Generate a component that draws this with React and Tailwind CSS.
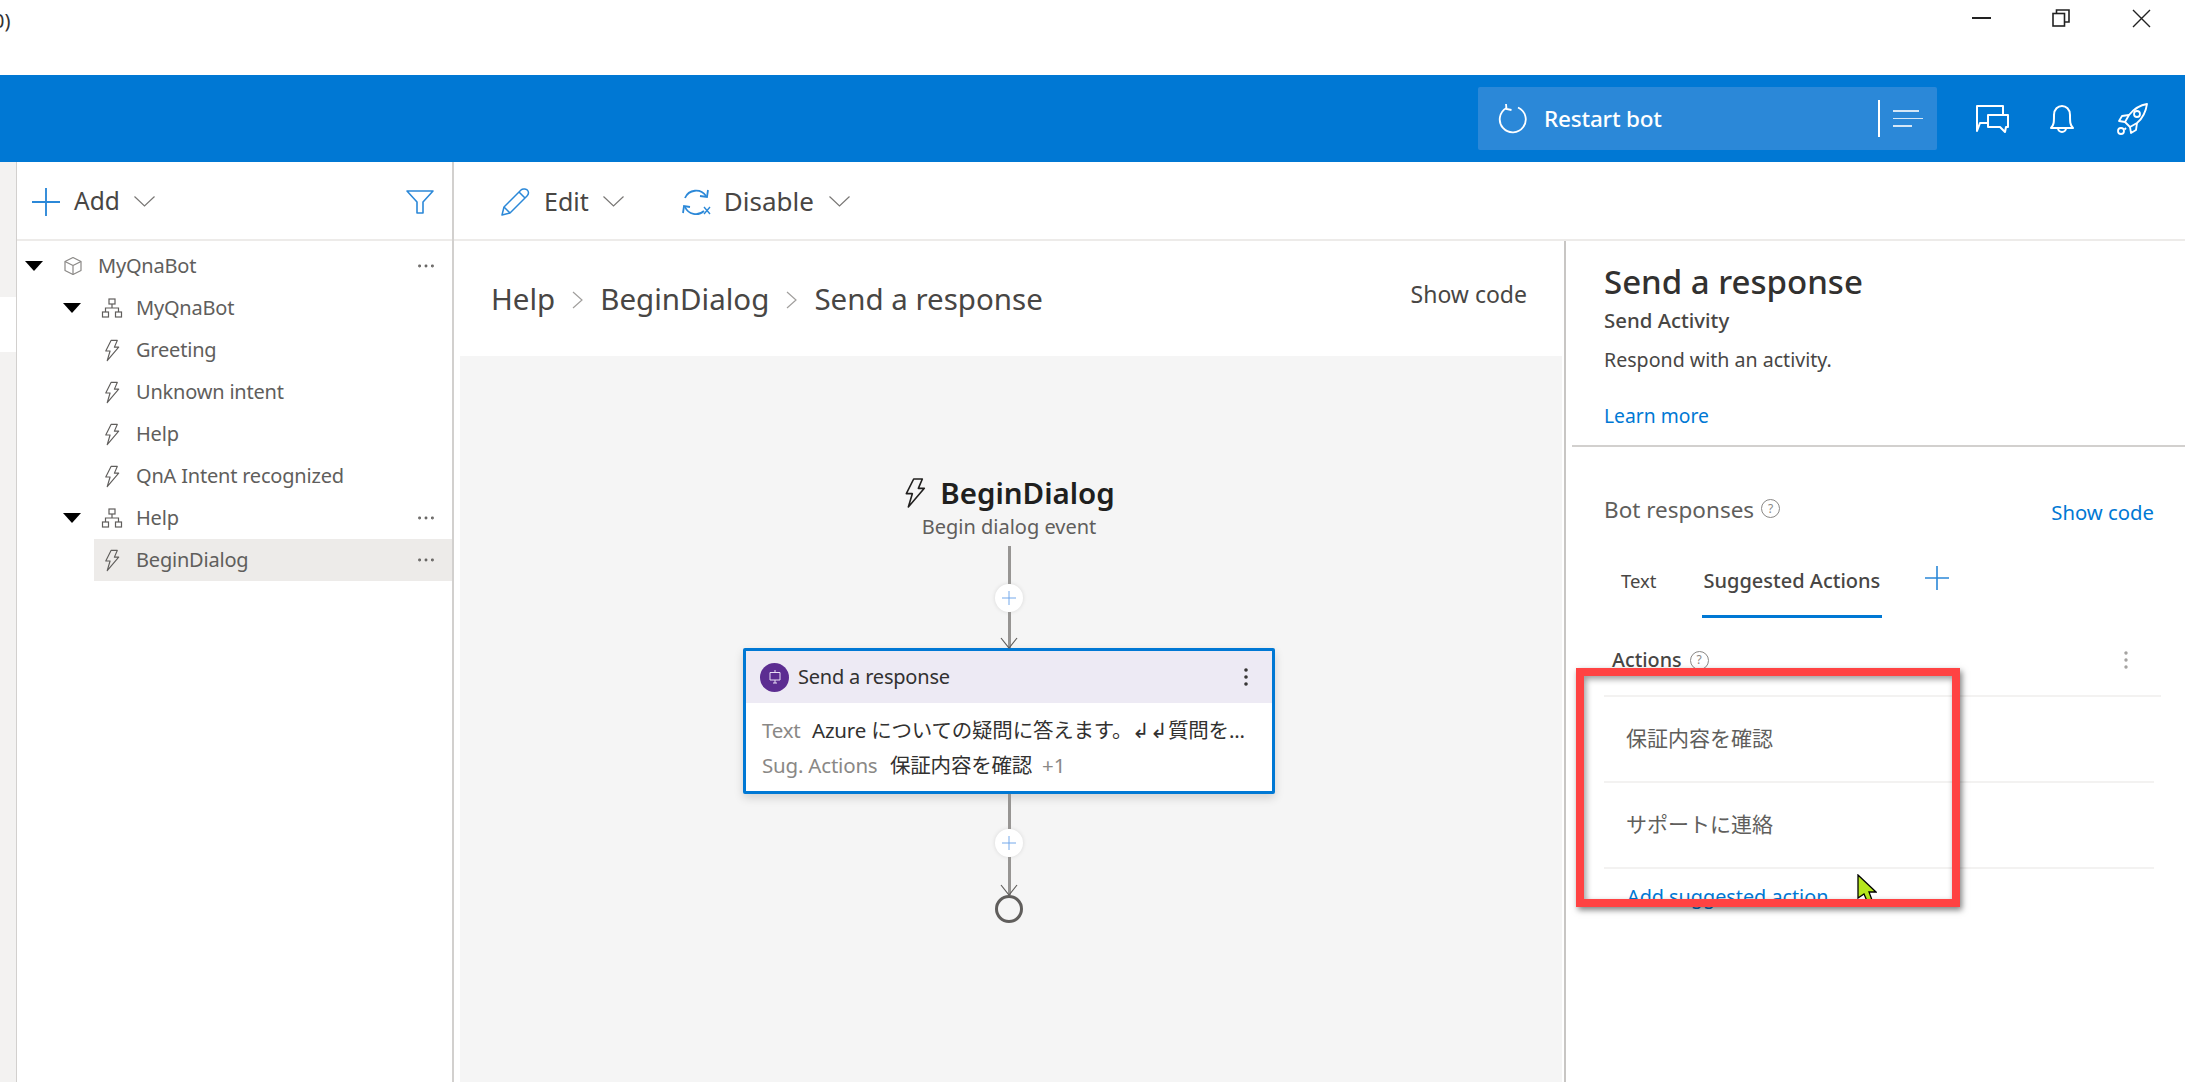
import React from "react";
import { MoreHorizontal, MoreVertical } from "lucide-react";

function Bolt({ className }) {
  return (
    <svg viewBox="0 0 18 24" fill="none" stroke="currentColor" strokeWidth="1.2" strokeLinejoin="round" className={className}>
      <path d="M8 1.5 L14.5 1.5 L11.5 8.5 L16 8.5 L4 22.5 L7 12.5 L2.5 12.5 Z" />
    </svg>
  );
}

function Cube({ className }) {
  return (
    <svg viewBox="0 0 20 20" fill="none" stroke="currentColor" strokeWidth="1.2" strokeLinejoin="round" className={className}>
      <path d="M10 1.5 L18 5.5 V14.5 L10 18.5 L2 14.5 V5.5 Z" />
      <path d="M2 5.5 L10 9.5 L18 5.5 M10 9.5 V18.5" />
    </svg>
  );
}

function Hierarchy({ className }) {
  return (
    <svg viewBox="0 0 22 20" fill="none" stroke="currentColor" strokeWidth="1.2" className={className}>
      <rect x="8" y="1" width="6" height="5" />
      <rect x="1.5" y="14" width="6" height="5" />
      <rect x="14.5" y="14" width="6" height="5" />
      <path d="M11 6 V10 M4.5 14 V10 H17.5 V14" />
    </svg>
  );
}

function Caret() {
  return (
    <svg viewBox="0 0 18 10" className="w-[18px] h-[10px] text-black" fill="currentColor">
      <path d="M0 0 H18 L9 10 Z" />
    </svg>
  );
}

function Cross({ className }) {
  return (
    <svg viewBox="0 0 24 24" fill="none" stroke="currentColor" strokeWidth="1.6" className={className}>
      <path d="M12 0 V24 M0 12 H24" />
    </svg>
  );
}

function Chevron({ className }) {
  return (
    <svg viewBox="0 0 21 11" fill="none" stroke="currentColor" strokeWidth="1.2" className={`w-[21px] h-[11px] text-[#797775] ${className || ""}`}>
      <path d="M0.5 0.5 L10.5 10 L20.5 0.5" />
    </svg>
  );
}

function Crumb() {
  return (
    <svg viewBox="0 0 11 18" fill="none" stroke="#a19f9d" strokeWidth="1.2" className="w-[11px] h-[18px] mx-[17px] shrink-0">
      <path d="M1 1 L10 9 L1 17" />
    </svg>
  );
}

function Help({ className }) {
  return (
    <span className={`inline-flex items-center justify-center rounded-full border border-[#8a8886] text-[#8a8886] text-[12px] leading-none w-[19px] h-[19px] ${className || ""}`}>?</span>
  );
}

function TreeRow({ pad, kind, label, caret, dots, selected }) {
  return (
    <div className={`h-[42px] flex items-center ${pad}`}>
      <div className={`flex items-center h-full flex-1 ${selected ? "bg-[#edebe9] pl-[9px] -ml-[9px]" : ""}`}>
        {caret && <span className="w-[38px] flex"><Caret /></span>}
        {kind === "cube" && <Cube className="w-[20px] h-[20px] text-[#8a8886] mr-[15px]" />}
        {kind === "tree" && <Hierarchy className="w-[22px] h-[20px] text-[#605e5c] mr-[13px]" />}
        {kind === "bolt" && <Bolt className="w-[18px] h-[23px] text-[#605e5c] mr-[15px]" />}
        <span className="text-[20px] text-[#605e5c] tracking-[-0.2px] flex-1">{label}</span>
        {dots && <MoreHorizontal className="w-[22px] h-[22px] text-[#605e5c] mr-[15px]" strokeWidth={1.2} />}
      </div>
    </div>
  );
}

function Connector({ height, arrow }) {
  return (
    <div className={`relative w-[3px] bg-[#979593] shrink-0 ${height}`}>
      {arrow && (
        <svg viewBox="0 0 20 12" fill="none" stroke="#605e5c" strokeWidth="1.2" className="absolute -bottom-[1px] -left-[8.5px] w-[20px] h-[12px]">
          <path d="M2 1 L10 11 L18 1" />
        </svg>
      )}
    </div>
  );
}

function AddNode() {
  return (
    <div className="w-[28px] h-[28px] rounded-full bg-white shadow-[0_0_4px_rgba(0,0,0,0.12)] flex items-center justify-center shrink-0">
      <Cross className="w-[14px] h-[14px] text-[#6aa3ea]" />
    </div>
  );
}

export default function App() {
  return (
    <div className="relative w-[2185px] h-[1082px] overflow-hidden bg-white flex flex-col font-['Noto_Sans','Noto_Sans_CJK_JP',sans-serif]">
      {/* window title bar */}
      <div className="h-[75px] shrink-0 flex items-start justify-between">
        <span className="-ml-[7px] mt-[6px] text-[20px] text-[#333]">0)</span>
        <div className="flex items-center h-[36px] pr-[34px]">
          <div className="w-[19px] h-[2px] bg-[#222] mr-[61px]" />
          <svg viewBox="0 0 18 18" fill="none" stroke="#222" strokeWidth="1.6" className="w-[18px] h-[18px] mr-[62px]">
            <rect x="1" y="4.5" width="11.5" height="12.5" />
            <path d="M4.5 4.5 V1 H17 V13 H12.5" />
          </svg>
          <svg viewBox="0 0 19 19" fill="none" stroke="#222" strokeWidth="1.4" className="w-[19px] h-[19px]">
            <path d="M1 1 L18 18 M18 1 L1 18" />
          </svg>
        </div>
      </div>

      {/* blue header */}
      <div className="h-[87px] shrink-0 bg-[#0078d4] flex items-center justify-end pr-[36px]">
        <div className="w-[459px] h-[63px] bg-[#2b88d8] rounded-[2px] flex items-center text-white pl-[19px]">
          <svg viewBox="0 0 32 32" fill="none" stroke="white" strokeWidth="1.8" className="w-[32px] h-[32px] mr-[15px]">
            <path d="M21 4.5 A13 13 0 1 1 9.5 5" />
            <path d="M9 1 L9.5 6 L14.5 7" />
          </svg>
          <span className="text-[22.5px] font-medium tracking-[-0.2px] flex-1">Restart bot</span>
          <div className="w-[2px] h-[37px] bg-white mr-[13px]" />
          <div className="w-[30px] mr-[14px] flex flex-col gap-[6px]">
            <div className="h-[1.5px] w-[26px] bg-white/80" />
            <div className="h-[1.5px] w-[30px] bg-white/80" />
            <div className="h-[1.5px] w-[19px] bg-white/80" />
          </div>
        </div>
        <svg viewBox="0 0 36 30" fill="none" stroke="white" strokeWidth="2" strokeLinejoin="round" className="w-[36px] h-[30px] ml-[37px]">
          <path d="M14 19 H6 L3 27 V2 H29 V11" />
          <path d="M14 11 H34 V23 H32 L31 28 L26 23 H14 Z" />
        </svg>
        <svg viewBox="0 0 26 30" fill="none" stroke="white" strokeWidth="2" strokeLinejoin="round" className="w-[26px] h-[30px] ml-[39px]">
          <path d="M2 24 C5 21 5 18 5 11 C5 5 9 2 13 2 C17 2 21 5 21 11 C21 18 21 21 24 24 Z" />
          <path d="M9 24 A4 4 0 0 0 17 24" />
        </svg>
        <svg viewBox="0 0 34 34" fill="none" stroke="white" strokeWidth="1.8" strokeLinejoin="round" className="w-[34px] h-[34px] ml-[40px]">
          <path d="M32 2 C25 3 19 7 14 13 L10 20 L15 25 L22 21 C28 16 31 9 32 2 Z" />
          <circle cx="22" cy="12" r="3" />
          <path d="M14 13 L7 14 L4 19 L10 20 M22 21 L21 28 L16 31 L15 25 M11 26 L9.5 27.5" />
          <circle cx="6" cy="29" r="3" />
        </svg>
      </div>

      <div className="flex-1 flex min-h-0">
        {/* left rail */}
        <div className="w-[16px] shrink-0 flex flex-col">
          <div className="h-[135px] bg-[#f3f2f1]" />
          <div className="h-[55px] bg-white" />
          <div className="flex-1 bg-[#f3f2f1]" />
        </div>

        {/* project tree */}
        <div className="w-[438px] shrink-0 border-l border-r-2 border-[#d2d0ce] flex flex-col">
          <div className="h-[79px] shrink-0 border-b-2 border-[#edebe9] flex items-center pl-[15px] pr-[17px] pt-[2px]">
            <Cross className="w-[28px] h-[28px] text-[#2b88d8]" />
            <span className="ml-[14px] text-[24.5px] text-[#484644]">Add</span>
            <Chevron className="ml-[14px]" />
            <svg viewBox="0 0 30 26" fill="none" stroke="#2b88d8" strokeWidth="1.6" strokeLinejoin="round" className="ml-auto w-[30px] h-[26px]">
              <path d="M2 2 H28 L18 13 V24 H12 V13 Z" />
            </svg>
          </div>
          <div className="pt-[4px]">
            <TreeRow pad="pl-[8px]" kind="cube" label="MyQnaBot" caret dots />
            <TreeRow pad="pl-[46px]" kind="tree" label="MyQnaBot" caret />
            <TreeRow pad="pl-[86px]" kind="bolt" label="Greeting" />
            <TreeRow pad="pl-[86px]" kind="bolt" label="Unknown intent" />
            <TreeRow pad="pl-[86px]" kind="bolt" label="Help" />
            <TreeRow pad="pl-[86px]" kind="bolt" label="QnA Intent recognized" />
            <TreeRow pad="pl-[46px]" kind="tree" label="Help" caret dots />
            <TreeRow pad="pl-[86px]" kind="bolt" label="BeginDialog" dots selected />
          </div>
        </div>

        {/* main column */}
        <div className="w-[1110px] shrink-0 flex flex-col">
          <div className="h-[79px] shrink-0 border-b-2 border-[#edebe9] flex items-center pl-[46px] pt-[2px]">
            <svg viewBox="0 0 30 30" fill="none" stroke="#2b88d8" strokeWidth="1.5" strokeLinejoin="round" className="w-[30px] h-[30px]">
              <path d="M2 28 L4 20 L21 3 C23 1 27 2 28 4 C29 6 28 8 27 9 L10 26 Z" />
              <path d="M19 5 L25 11 M4 20 L10 26" />
            </svg>
            <span className="ml-[14px] text-[25px] text-[#484644]">Edit</span>
            <Chevron className="ml-[14px]" />
            <svg viewBox="0 0 30 30" fill="none" stroke="#2b88d8" strokeWidth="1.8" className="ml-[57px] w-[30px] h-[30px]">
              <path d="M4 11 A12 12 0 0 1 25 9" />
              <path d="M27 3 L26 10 L19 9" />
              <path d="M23 24 A12 12 0 0 1 4 20" />
              <path d="M2 26 L3 19 L9 20" />
              <path d="M23 20 L29 27 M29 20 L23 27" strokeWidth="1.4" />
            </svg>
            <span className="ml-[13px] text-[26px] text-[#484644]">Disable</span>
            <Chevron className="ml-[15px]" />
          </div>
          <div className="h-[115px] shrink-0 flex items-center pl-[37px] pr-[37px] text-[#484644] pt-[2px]">
            <span className="text-[29.5px]">Help</span>
            <Crumb />
            <span className="text-[29.5px]">BeginDialog</span>
            <Crumb />
            <span className="text-[29.5px]">Send a response</span>
            <span className="ml-auto text-[23px] -mt-[10px]">Show code</span>
          </div>

          {/* canvas */}
          <div className="flex-1 ml-[6px] mr-[2px] bg-[#f5f5f5] flex flex-col items-center pt-[119px] pr-[4px]">
            <div className="flex items-center h-[36px]">
              <Bolt className="w-[24px] h-[32px] text-[#201f1e]" />
              <span className="ml-[13px] text-[29.5px] font-semibold text-[#201f1e]">BeginDialog</span>
            </div>
            <span className="text-[20px] leading-[24px] mt-[4px] text-[#605e5c]">Begin dialog event</span>
            <div className="mt-[7px]"><Connector height="h-[38px]" /></div>
            <AddNode />
            <Connector height="h-[36px]" arrow />
            <div className="w-[532px] h-[146px] shrink-0 border-[3px] border-[#0078d4] rounded-[2px] bg-white shadow-[0_4px_10px_rgba(0,0,0,0.15)] flex flex-col">
              <div className="h-[52px] bg-[#edeaf4] flex items-center pl-[14px] pr-[14px]">
                <div className="w-[29px] h-[29px] rounded-full bg-[#5c2d91] flex items-center justify-center">
                  <svg viewBox="0 0 16 16" fill="none" stroke="#e8dff5" strokeWidth="1" className="w-[16px] h-[16px]">
                    <path d="M8 1 V3.5 M3 3.5 H13 V11 H3 Z M6 14 H10 M8 11 V14" />
                  </svg>
                </div>
                <span className="ml-[9px] text-[20px] text-[#323130] tracking-[-0.2px] flex-1">Send a response</span>
                <MoreVertical className="w-[24px] h-[24px] text-[#323130]" strokeWidth={1.6} />
              </div>
              <div className="flex-1 pl-[16px] pt-[10px] text-[20.5px] leading-[35px] whitespace-nowrap tracking-[-0.2px]">
                <div className="flex">
                  <span className="text-[#8a8886] w-[50px]">Text</span>
                  <span className="text-[#323130]">Azure についての疑問に答えます。↲↲質問を...</span>
                </div>
                <div className="flex">
                  <span className="text-[#8a8886] w-[128px]">Sug. Actions</span>
                  <span className="text-[#323130]">保証内容を確認</span>
                  <span className="text-[#8a8886] ml-[10px]">+1</span>
                </div>
              </div>
            </div>
            <Connector height="h-[35px]" />
            <AddNode />
            <Connector height="h-[38px]" arrow />
            <div className="w-[28px] h-[28px] rounded-full border-[3px] border-[#605e5c] shrink-0" />
          </div>
        </div>

        {/* properties panel */}
        <div className="flex-1 min-w-0 flex flex-col relative">
          <div className="h-[79px] shrink-0 border-b-2 border-[#edebe9]" />
          <div className="flex-1 border-l-2 border-[#c8c6c4] flex flex-col">
            <div className="h-[206px] shrink-0 ml-[6px] border-b-2 border-[#d2d0ce] pl-[32px] pt-[21px] flex flex-col">
              <span className="text-[33px] leading-[40px] font-medium text-[#323130]">Send a response</span>
              <span className="text-[20.4px] leading-[24px] font-medium text-[#484644] mt-[6px]">Send Activity</span>
              <span className="text-[19.6px] leading-[24px] text-[#484644] mt-[16px]">Respond with an activity.</span>
              <span className="text-[19.3px] leading-[24px] text-[#0078d4] mt-[32px]">Learn more</span>
            </div>
            <div className="pl-[38px] pr-[31px] flex flex-col">
              <div className="flex items-center h-[36px] mt-[45px]">
                <span className="text-[22.5px] text-[#605e5c]">Bot responses</span>
                <Help className="ml-[7px] -mt-[3px]" />
                <span className="ml-auto text-[20.3px] text-[#0078d4] mt-[4px]">Show code</span>
              </div>
              <div className="flex items-start mt-[38px] h-[58px]">
                <span className="ml-[17px] text-[18.5px] leading-[30px] text-[#484644]">Text</span>
                <div className="ml-[45px] border-b-[3px] border-[#0078d4] h-[52px] px-[2px]">
                  <span className="text-[20px] leading-[30px] font-medium text-[#484644] whitespace-nowrap">Suggested Actions</span>
                </div>
                <Cross className="ml-[43px] w-[24px] h-[24px] text-[#2b88d8]" />
              </div>
              <div className="flex items-center h-[72px] mt-[1px] border-b-2 border-[#f3f2f1] pl-[8px] -mr-[7px]">
                <span className="text-[19.8px] font-medium text-[#484644]">Actions</span>
                <Help className="ml-[8px]" />
                <MoreVertical className="ml-auto mr-[23px] w-[24px] h-[24px] text-[#a19f9d]" strokeWidth={1.4} />
              </div>
              <div className="h-[86px] border-b-2 border-[#f3f2f1] flex items-center pl-[22px] text-[21px] text-[#605e5c]">保証内容を確認</div>
              <div className="h-[86px] border-b-2 border-[#f3f2f1] flex items-center pl-[22px] text-[21px] text-[#605e5c]">サポートに連絡</div>
              <span className="pl-[23px] pt-[13px] text-[19.8px] leading-[30px] text-[#0078d4]">Add suggested action</span>
            </div>
          </div>
        </div>
      </div>

      {/* cursor and annotation on top of the screenshot */}
      <svg viewBox="0 0 20 28" className="absolute left-[1857px] top-[874px] w-[20px] h-[28px]">
        <path d="M1 1 L19 18 L12 18 L15 26 L10 27 L7 20 L1 24 Z" fill="#b5e61d" stroke="black" strokeWidth="1.3" />
      </svg>
      <div className="absolute left-[1576px] top-[668px] w-[384px] h-[239px] border-[8px] border-[#ff4343] shadow-[2px_3px_6px_rgba(0,0,0,0.5),inset_2px_3px_6px_rgba(0,0,0,0.4)]" />
    </div>
  );
}
